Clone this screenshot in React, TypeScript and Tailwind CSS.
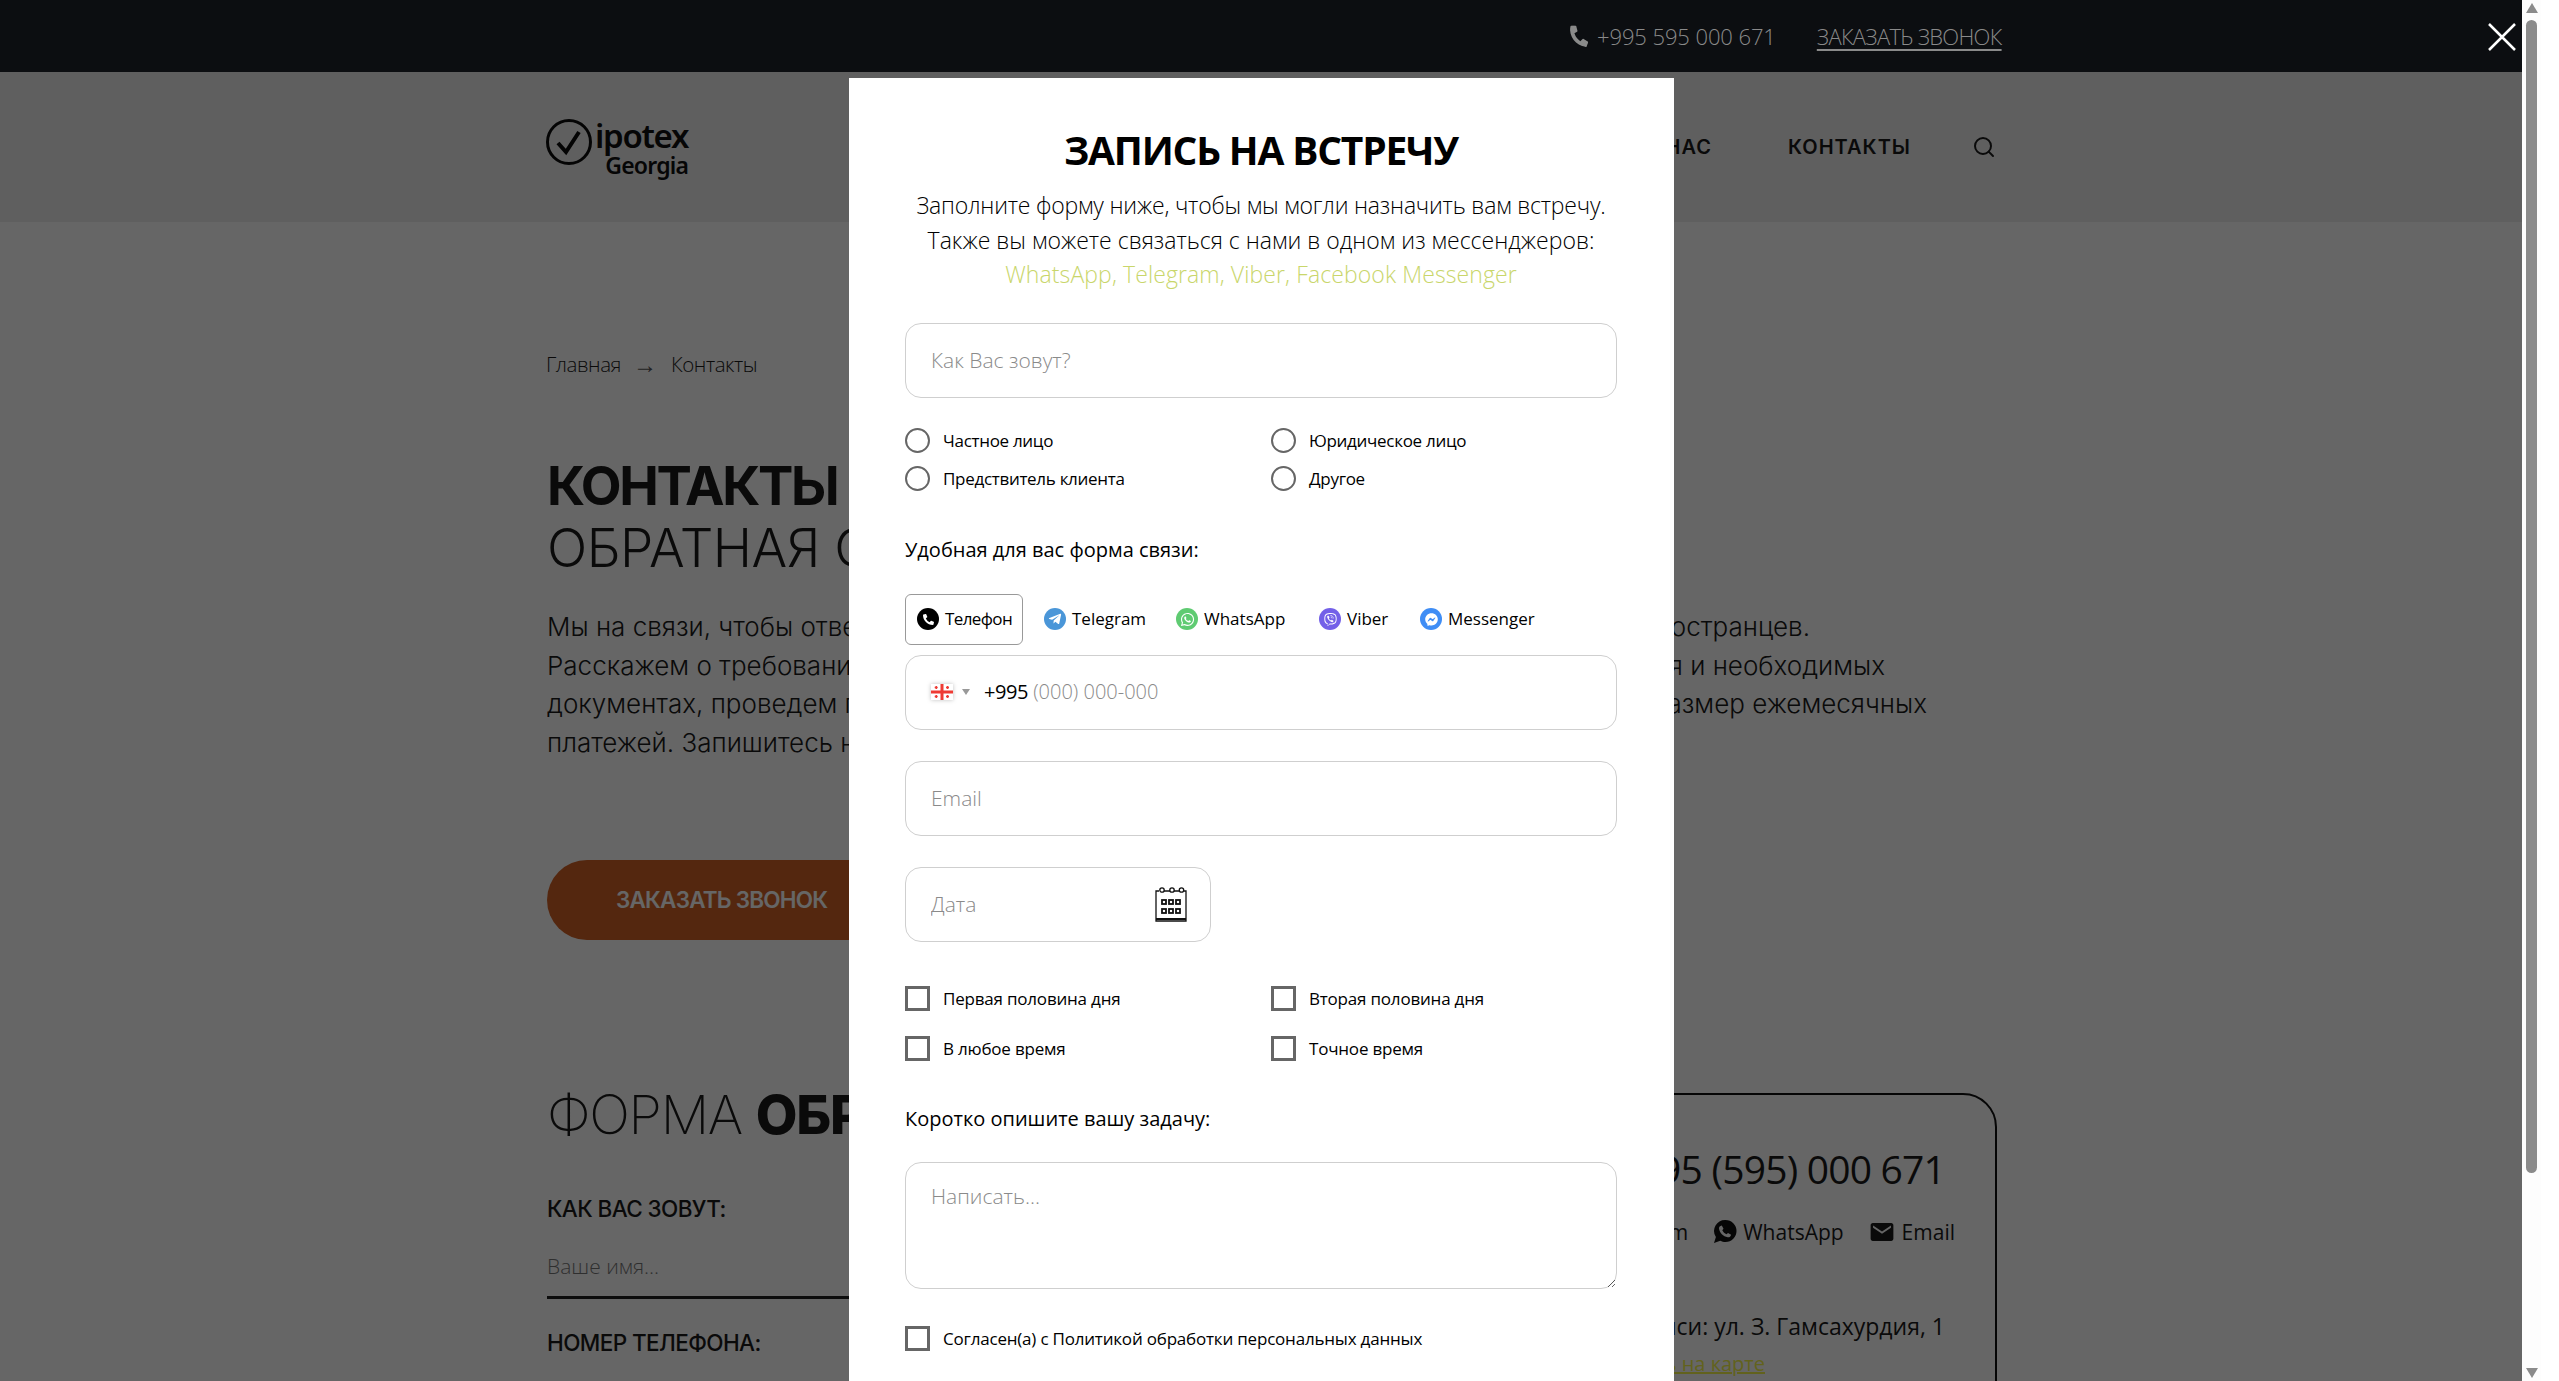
import React from 'react';
import { Search } from 'lucide-react';
import { FaFacebookMessenger, FaPhoneAlt, FaTelegramPlane, FaViber, FaWhatsapp } from 'react-icons/fa';
import { IoMdMail } from 'react-icons/io';

// column widths keep the icons where the reference has them
const messengers = [
    { name: 'Телефон', icon: <FaPhoneAlt size={11} />, bg: 'bg-black', col: 'w-[127px]', active: true },
    { name: 'Telegram', icon: <FaTelegramPlane size={14} />, bg: 'bg-[#4a96d8]', col: 'w-[132px] pl-[12px]' },
    { name: 'WhatsApp', icon: <FaWhatsapp size={15} />, bg: 'bg-[#5fcb72]', col: 'w-[143px] pl-[12px]' },
    { name: 'Viber', icon: <FaViber size={13} />, bg: 'bg-[#7360e8]', col: 'w-[101px] pl-[12px]' },
    { name: 'Messenger', icon: <FaFacebookMessenger size={13} />, bg: 'bg-[#3f8df5]', col: 'w-[130px] pl-[12px]' },
];

const inputCls = "block w-full h-[75px] rounded-2xl border border-[#cfcfcf] bg-white px-[25px] text-[21px] text-black outline-none placeholder:text-[#8a8a8a] font-['Open_Sans',sans-serif] font-light";

const Logo = () => (
    <div className="flex items-start gap-[3px] text-[#111]">
        <svg width="46" height="46" viewBox="0 0 46 46" fill="none" className="mt-[1px]">
            <circle cx="23" cy="23" r="21.5" stroke="#0b0b0b" strokeWidth="3" />
            <path d="M12 24l8 9L33 13" stroke="#0b0b0b" strokeWidth="4" />
        </svg>
        <div className="flex flex-col items-end font-['Noto_Sans',sans-serif] font-semibold">
            <span className="text-[33px] leading-[36px] tracking-[-1.3px]">ipotex</span>
            <span className="text-[23px] leading-[23px] tracking-[-0.8px]">Georgia</span>
        </div>
    </div>
);

const WhatsappSolid = () => (
    <svg width="24" height="25" viewBox="0 0 24 25">
        <path d="M12.500 1a11 11 0 0 1 0 22c-1.900 0-3.600-.5-5.200-1.300L1 24l1.900-6A11 11 0 0 1 12.500 1z" fill="#111" />
        <path d="M8.800 6.500l1.700 3.300-1.200 1.500c.9 1.900 2.300 3.200 4.200 4l1.500-1.300 3.100 1.800c-.4 1.900-1.800 2.700-3.400 2.500-4.500-.6-8.200-4.400-8.700-8.700-.1-1.500.9-2.800 2.800-3.100z" fill="#fff" />
    </svg>
);

const PageBehind = () => (
    <div className="h-[1381px] overflow-hidden bg-white text-[#1a1a1a]">
        <div className="h-[72px] bg-[#1e232a]" />
        <header className="h-[150px] bg-[#eeeeee]">
            <div className="flex w-[1450px] h-full items-center justify-between ml-[546px]">
                <Logo />
                <nav className="flex items-center gap-[76px] text-[20px] font-semibold tracking-[1px] font-['Inter',sans-serif]">
                    <span>О НАС</span>
                    <span>КОНТАКТЫ</span>
                    <Search size={24} strokeWidth={2} className="-ml-[15px]" />
                </nav>
            </div>
        </header>
        <main className="w-[1450px] ml-[547px]">
            <div className="flex items-center mt-[128px] h-[28px] text-[20.500px] font-light font-['Open_Sans',sans-serif] tracking-[-0.45px]">
                <span className="-ml-[1px]">Главная</span>
                <span className="ml-[12px] mr-[14px] w-[24px] text-[24px] leading-[20px] text-[#555]">→</span>
                <span>Контакты</span>
            </div>
            <h1 className="mt-[77px] text-[53px] leading-[63px] font-['Inter',sans-serif]">
                <b className="font-bold block tracking-[-2.300px]">КОНТАКТЫ</b>
                <span className="font-light block -mt-[1px] tracking-[-0.5px]">ОБРАТНАЯ СВЯЗЬ</span>
            </h1>
            <div className="mt-[28px] text-[26px] leading-[38.7px] font-light font-['Inter',sans-serif] whitespace-nowrap">
                <div className="flex justify-between w-[1263px]"><span>Мы на связи, чтобы ответить на вопросы</span><span>иностранцев.</span></div>
                <div className="flex justify-between w-[1338px]"><span>Расскажем о требованиях банков</span><span>условия и необходимых</span></div>
                <div className="flex justify-between w-[1380px]"><span>документах, проведем предварительный</span><span>размер ежемесячных</span></div>
                <div>платежей. Запишитесь на консультацию</div>
            </div>
            <button className="mt-[97px] h-[80px] w-[460px] rounded-full bg-[#d26226] text-left pl-[69px] text-[22.500px] font-semibold text-white font-['Inter',sans-serif] tracking-[-0.8px]">
                ЗАКАЗАТЬ ЗВОНОК
            </button>
            <div className="mt-[153px] flex items-start justify-between">
                <div className="w-[640px]">
                    <h2 className="mt-[-10px] text-[54px] leading-[64px] font-extralight whitespace-nowrap font-['Inter',sans-serif] tracking-[-1.300px]">
                        ФОРМА <b className="font-extrabold">ОБРАТНОЙ СВЯЗИ</b>
                    </h2>
                    <div className="mt-[47px] text-[22.500px] font-medium leading-[30px] font-['Inter',sans-serif] tracking-[-0.6px]">КАК ВАС ЗОВУТ:</div>
                    <div className="mt-[27px] text-[21px] leading-[30px] text-[#777] font-['Open_Sans',sans-serif] font-light">Ваше имя...</div>
                    <div className="mt-[15px] h-[3px] bg-[#222]" />
                    <div className="mt-[29px] text-[22.500px] font-medium leading-[30px] font-['Inter',sans-serif] tracking-[-0.6px]">НОМЕР ТЕЛЕФОНА:</div>
                </div>
                <aside className="w-[620px] h-[400px] rounded-[34px] border-2 border-[#111] pr-[50px] flex flex-col items-end font-['Open_Sans',sans-serif]">
                    <div className="mt-[46px] text-[39px] leading-[56px] font-normal tracking-[-0.8px]">+995 (595) 000 671</div>
                    <div className="mt-[20px] -mr-[10px] flex items-center gap-[25px] text-[21px] leading-[30px]">
                        <span>Telegram</span>
                        <span className="flex items-center gap-[6px]"><WhatsappSolid />WhatsApp</span>
                        <span className="flex items-center gap-[7px]"><IoMdMail size={26} />Email</span>
                    </div>
                    <div className="mt-[62px] text-[23px] leading-[34px]">Адрес в Тбилиси: ул. З. Гамсахурдия, 1</div>
                    <div className="mt-[4px] mr-[180px] text-[20px] leading-[34px] text-[#f4f64a] underline">Посмотреть на карте</div>
                </aside>
            </div>
        </main>
    </div>
);

const TopBar = () => (
    <div className="absolute inset-x-0 top-0 z-20 h-[72px] bg-[#0c0e11] flex items-center">
        <div className="ml-[1569px] flex items-center text-[22px] font-light text-[#8a8a8a] font-['Open_Sans',sans-serif]">
            <FaPhoneAlt size={20} className="rotate-[8deg]" />
            <span className="ml-[8px] tracking-[-0.1px]">+995 595 000 671</span>
            <span className="ml-[41px] underline underline-offset-4 tracking-[-0.7px]">ЗАКАЗАТЬ ЗВОНОК</span>
        </div>
        <svg width="30" height="30" viewBox="0 0 30 30" className="absolute left-[2487px] top-[22px]" stroke="#fff" strokeWidth="2.5">
            <path d="M2 2l26 26M28 2L2 28" />
        </svg>
    </div>
);

const Radio = ({ label }: { label: string }) => (
    <label className="flex items-center gap-[13px] text-[17px] tracking-[-0.3px] text-black font-['Open_Sans',sans-serif]">
        <input type="radio" className="appearance-none w-[25px] h-[25px] rounded-full border-2 border-[#666]" />
        {label}
    </label>
);

const Check = ({ label }: { label: string }) => (
    <label className="flex items-center gap-[13px] text-[17px] tracking-[-0.2px] text-black font-['Open_Sans',sans-serif]">
        <input type="checkbox" className="appearance-none w-[25px] h-[25px] border-[3px] border-[#666]" />
        {label}
    </label>
);

const Flag = () => (
    <svg width="22" height="16" viewBox="0 0 22 16" className="drop-shadow-[0_0_2px_rgba(0,0,0,0.25)]">
        <rect width="22" height="16" fill="#ffffff" />
        <path d="M9.500 0h3v16h-3zM0 6.500h22v3H0z" fill="#ee3b34" />
        <path d="M4.500 2h1.500v3H4.500zM3.700 2.800h3v1.400h-3zM15.800 2h1.500v3h-1.500zM15 2.800h3v1.400h-3zM4.500 11h1.500v3H4.500zM3.700 11.800h3v1.400h-3zM15.800 11h1.500v3h-1.500zM15 11.800h3v1.400h-3z" fill="#ee3b34" />
    </svg>
);

const CalendarIcon = () => (
    <svg width="32" height="36" viewBox="0 0 32 36" fill="none" stroke="#111" strokeWidth="1.3">
        <path d="M4 5H1v30h30V5h-2M9 5h6M19 5h5" />
        <circle cx="7" cy="4" r="2.200" />
        <circle cx="17" cy="4" r="2.200" />
        <circle cx="26.500" cy="4" r="2.200" />
        <path d="M1 33h30" strokeWidth="2" />
        <rect x="7" y="14" width="4" height="4" strokeWidth="1.800" />
        <rect x="14" y="14" width="4" height="4" strokeWidth="1.800" />
        <rect x="21" y="14" width="4" height="4" strokeWidth="1.800" />
        <rect x="7" y="23" width="4" height="4" strokeWidth="1.800" />
        <rect x="14" y="23" width="4" height="4" strokeWidth="1.800" />
        <rect x="21" y="23" width="4" height="4" strokeWidth="1.800" />
    </svg>
);

const Modal = () => (
    <div className="absolute left-[849px] top-[78px] z-30 w-[825px] h-[1303px] overflow-hidden bg-white pl-[56px] pr-[57px] pt-[50px]">
        <h3 className="h-[44px] text-center text-[39px] leading-[44px] font-bold text-black font-['Open_Sans',sans-serif] tracking-[-1.2px] whitespace-nowrap">ЗАПИСЬ НА ВСТРЕЧУ</h3>
        <div className="mt-[16px] text-center text-[23px] leading-[34.5px] text-black font-light font-['Open_Sans',sans-serif] whitespace-nowrap">
            <div className="tracking-[-0.2px]">Заполните форму ниже, чтобы мы могли назначить вам встречу.</div>
            <div>Также вы можете связаться с нами в одном из мессенджеров:</div>
            <div className="text-[#c9d66b] tracking-[0.1px]">WhatsApp, Telegram, Viber, Facebook Messenger</div>
        </div>
        <input className={`mt-[31px] ${inputCls}`} placeholder="Как Вас зовут?" />
        <div className="mt-[30px] grid grid-cols-[366px_1fr] gap-y-[13px]">
            <Radio label="Частное лицо" />
            <Radio label="Юридическое лицо" />
            <Radio label="Предствитель клиента" />
            <Radio label="Другое" />
        </div>
        <div className="mt-[43px] h-[30px] text-[20px] leading-[30px] text-black font-['Open_Sans',sans-serif]">Удобная для вас форма связи:</div>
        <div className="mt-[29px] flex h-[51px] items-center">
            {messengers.map((m) => (
                <div key={m.name} className={`h-full shrink-0 text-[17px] text-black font-['Open_Sans',sans-serif] ${m.col}`}>
                    <div
                        className={m.active
                            ? "flex h-full w-[118px] items-center gap-[6px] rounded-md border border-[#999] pl-[11px] tracking-[-0.6px]"
                            : "flex h-full items-center gap-[6px]"}
                    >
                        <span className={`flex h-[22px] w-[22px] shrink-0 items-center justify-center rounded-full text-white ${m.bg}`}>{m.icon}</span>
                        {m.name}
                    </div>
                </div>
            ))}
        </div>
        <div className="mt-[10px] flex h-[75px] items-center rounded-2xl border border-[#cfcfcf] pl-[25px] text-[20px] font-['Open_Sans',sans-serif]">
            <Flag />
            <span className="ml-[9px] h-0 w-0 border-x-[4px] border-t-[6px] border-x-transparent border-t-[#999]" />
            <span className="ml-[14px] text-black tracking-[-0.4px]">+995</span>
            <span className="ml-[5px] text-[#8a8a8a] font-light">(000) 000-000</span>
        </div>
        <input className={`mt-[31px] ${inputCls}`} placeholder="Email" />
        <div className="relative mt-[31px] w-[306px]">
            <input className={inputCls} placeholder="Дата" />
            <div className="absolute right-[24px] top-[19px]"><CalendarIcon /></div>
        </div>
        <div className="mt-[44px] grid grid-cols-[366px_1fr] gap-y-[25px]">
            <Check label="Первая половина дня" />
            <Check label="Вторая половина дня" />
            <Check label="В любое время" />
            <Check label="Точное время" />
        </div>
        <div className="mt-[42px] h-[30px] text-[20px] leading-[30px] text-black font-['Open_Sans',sans-serif]">Коротко опишите вашу задачу:</div>
        <textarea className="mt-[28px] block h-[127px] w-full rounded-2xl border border-[#cfcfcf] px-[25px] py-[18px] text-[21px] font-light outline-none placeholder:text-[#8a8a8a] font-['Open_Sans',sans-serif]" placeholder="Написать..." />
        <div className="mt-[37px]">
            <Check label="Согласен(а) с Политикой обработки персональных данных" />
        </div>
    </div>
);

const Scrollbar = () => (
    <div className="w-[19px] h-full bg-[#fdfdfd] flex flex-col items-center">
        <div className="mt-[3px] h-0 w-0 border-x-[6px] border-b-[10px] border-x-transparent border-b-[#8b8b8b]" />
        <div className="mt-[7px] h-[1153px] w-[11px] rounded-full bg-[#8b8b8b]" />
        <div className="mt-auto mb-[3px] h-0 w-0 border-x-[6px] border-t-[10px] border-x-transparent border-t-[#8b8b8b]" />
    </div>
);

const App = () => {
    return (
        <div className="flex h-[1381px] w-full overflow-hidden bg-white">
            <div className="relative w-[2522px] shrink-0">
                <PageBehind />
                <div className="absolute inset-0 z-10 bg-black/60" />
                <TopBar />
                <Modal />
            </div>
            <Scrollbar />
        </div>
    );
}

export default App;
